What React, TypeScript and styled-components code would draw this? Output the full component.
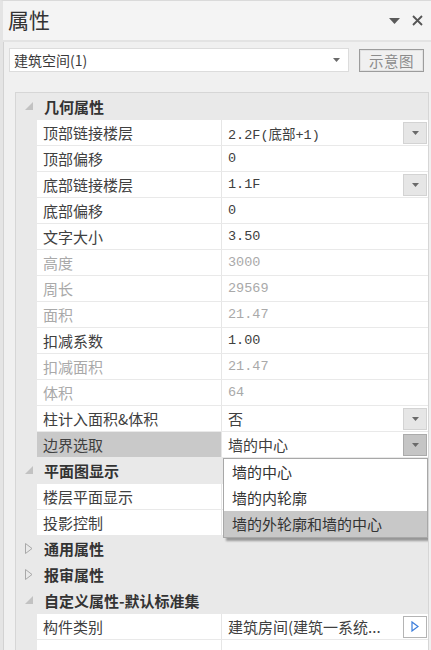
import styled, { createGlobalStyle } from 'styled-components';

const GlobalStyle = createGlobalStyle`
  html, body {
    margin: 0;
    padding: 0;
    background: #f0f0f0;
  }
  body {
    font-family: 'Noto Sans CJK SC', 'Noto Sans', sans-serif;
    color: #3a3a3a;
  }
`;

const Window = styled.div`
  width: 431px;
  height: 650px;
  box-sizing: border-box;
  border-top: 1px solid #dadada;
  border-left: 3px solid #e4e4e4;
  box-shadow: inset 1px 0 0 #d2d2d2;
  background: #f0f0f0;
  display: flex;
  flex-direction: column;
  overflow: hidden;
`;

const TitleBar = styled.div`
  height: 39px;
  flex-shrink: 0;
  display: flex;
  align-items: center;
  justify-content: space-between;
  padding: 0 8px 0 5px;
  background: #f4f4f4;
  border-bottom: 2px solid #e3e3e3;
`;

const Title = styled.div`
  font-size: 21px;
  color: #333;
  line-height: 1;
  margin-top: -3px;
`;

const TitleIcons = styled.div`
  display: flex;
  align-items: center;
  gap: 12px;
`;

const Toolbar = styled.div`
  display: flex;
  align-items: flex-start;
  gap: 10px;
  padding: 6px 0 0 6px;
  flex-shrink: 0;
`;

const Combo = styled.div`
  width: 340px;
  height: 24px;
  box-sizing: border-box;
  background: #fff;
  border: 1px solid #dcdcdc;
  display: flex;
  align-items: center;
  justify-content: space-between;
  padding: 0 8px 1px 4px;
  font-size: 14px;
`;

const SchemeButton = styled.div`
  width: 65px;
  height: 23px;
  margin-top: 1px;
  box-sizing: border-box;
  border: 1px solid #9c9c9c;
  box-shadow: inset 0 0 0 1px #e2e2e2;
  display: flex;
  align-items: center;
  justify-content: center;
  padding-bottom: 1px;
  font-size: 14.5px;
  color: #8c8c8c;
  letter-spacing: 0.5px;
`;

const Panel = styled.div`
  flex: 1;
  margin: 20px 2px 0 12px;
  padding-top: 1px;
  border: 1px solid #d6d6d6;
  border-bottom: none;
  background: #e9e9e9;
  overflow: hidden;
`;

const GroupHeader = styled.div`
  height: 26px;
  box-sizing: border-box;
  display: flex;
  align-items: center;
  padding: 0 0 2px 9px;
  gap: 11px;
  font-size: 15px;
  font-weight: 700;
  color: #333;
`;

const Row = styled.div`
  position: relative;
  height: 26px;
  margin-left: 21px;
  box-sizing: border-box;
  display: grid;
  grid-template-columns: 185px 1fr;
  border-bottom: 1px solid #e9e9e9;
`;

const Label = styled.div<{ $selected?: boolean; $disabled?: boolean }>`
  background: ${(p) => (p.$selected ? '#c9c9c9' : '#fff')};
  border-right: 1px solid #e6e6e6;
  display: flex;
  align-items: center;
  padding: 0 0 1px 6px;
  font-size: 15px;
  color: ${(p) => (p.$disabled ? '#a9a9a9' : '#404040')};
  white-space: nowrap;
`;

const Value = styled.div<{ $disabled?: boolean }>`
  background: #fff;
  display: flex;
  align-items: center;
  justify-content: space-between;
  padding-left: 6px;
  padding-right: 1px;
  font-family: 'Liberation Mono', 'Noto Sans CJK SC', monospace;
  font-size: 13.5px;
  color: ${(p) => (p.$disabled ? '#a9a9a9' : '#404040')};
  white-space: nowrap;
`;

const CjkValue = styled.span`
  font-family: 'Noto Sans CJK SC', sans-serif;
  font-size: 15px;
  margin-top: -1px;
`;

const DropButton = styled.div<{ $active?: boolean }>`
  width: 24px;
  height: 22px;
  box-sizing: border-box;
  background: ${(p) => (p.$active ? '#c5c5c5' : '#e6e6e6')};
  border: 1px solid ${(p) => (p.$active ? '#ababab' : '#d3d3d3')};
  display: flex;
  align-items: center;
  justify-content: center;
`;

const MoreButton = styled.div`
  width: 24px;
  height: 22px;
  box-sizing: border-box;
  background: #fff;
  border: 1px solid #b4b4b4;
  display: flex;
  align-items: center;
  justify-content: center;
`;

const Menu = styled.div`
  position: absolute;
  top: 26px;
  left: 186px;
  width: 205px;
  z-index: 2;
  box-sizing: border-box;
  background: #fff;
  border: 1px solid #a8a8a8;
  box-shadow: 3px 3px 2px rgba(0, 0, 0, 0.35);
`;

const MenuItem = styled.div<{ $hover?: boolean }>`
  height: 26px;
  box-sizing: border-box;
  display: flex;
  align-items: center;
  padding: 0 0 1px 8px;
  font-size: 15px;
  color: #333;
  background: ${(p) => (p.$hover ? '#c8c8c8' : '#fff')};
`;

const SmallArrow = () => (
  <svg width="7" height="4" viewBox="0 0 7 4">
    <polygon points="0,0 7,0 3.5,4" fill="#6a6a6a" />
  </svg>
);

const Expanded = () => (
  <svg width="8" height="8" viewBox="0 0 8 8">
    <polygon points="8,0 8,8 0,8" fill="#c2c2c2" />
  </svg>
);

const Collapsed = () => (
  <svg width="8" height="11" viewBox="0 0 8 11">
    <polygon points="0.5,0.5 7,5.5 0.5,10.5" fill="none" stroke="#a8a8a8" strokeWidth="1" />
  </svg>
);

type Prop = {
  label: string;
  value?: string;
  cjk?: boolean;
  disabled?: boolean;
  drop?: boolean;
};

const geometry: Prop[] = [
  { label: '顶部链接楼层', value: '2.2F(底部+1)', drop: true },
  { label: '顶部偏移', value: '0' },
  { label: '底部链接楼层', value: '1.1F', drop: true },
  { label: '底部偏移', value: '0' },
  { label: '文字大小', value: '3.50' },
  { label: '高度', value: '3000', disabled: true },
  { label: '周长', value: '29569', disabled: true },
  { label: '面积', value: '21.47', disabled: true },
  { label: '扣减系数', value: '1.00' },
  { label: '扣减面积', value: '21.47', disabled: true },
  { label: '体积', value: '64', disabled: true },
  { label: '柱计入面积&体积', value: '否', cjk: true, drop: true },
];

const PropRow = ({ p }: { p: Prop }) => (
  <Row>
    <Label $disabled={p.disabled}>{p.label}</Label>
    <Value $disabled={p.disabled}>
      {p.cjk ? <CjkValue>{p.value}</CjkValue> : <span>{p.value}</span>}
      {p.drop && (
        <DropButton>
          <SmallArrow />
        </DropButton>
      )}
    </Value>
  </Row>
);

export default function App() {
  return (
    <>
      <GlobalStyle />
      <Window>
        <TitleBar>
          <Title>属性</Title>
          <TitleIcons>
            <svg width="11" height="6" viewBox="0 0 11 6">
              <polygon points="0,0 11,0 5.5,6" fill="#5a5a5a" />
            </svg>
            <svg width="11" height="11" viewBox="0 0 11 11">
              <path d="M1 1 L10 10 M10 1 L1 10" stroke="#555" strokeWidth="1.8" />
            </svg>
          </TitleIcons>
        </TitleBar>

        <Toolbar>
          <Combo>
            <span>建筑空间(1)</span>
            <SmallArrow />
          </Combo>
          <SchemeButton>示意图</SchemeButton>
        </Toolbar>

        <Panel>
          <GroupHeader>
            <Expanded />
            几何属性
          </GroupHeader>
          {geometry.map((p) => (
            <PropRow key={p.label} p={p} />
          ))}
          <Row>
            <Label $selected>边界选取</Label>
            <Value>
              <CjkValue>墙的中心</CjkValue>
              <DropButton $active>
                <SmallArrow />
              </DropButton>
            </Value>
            <Menu>
              <MenuItem>墙的中心</MenuItem>
              <MenuItem>墙的内轮廓</MenuItem>
              <MenuItem $hover>墙的外轮廓和墙的中心</MenuItem>
            </Menu>
          </Row>

          <GroupHeader>
            <Expanded />
            平面图显示
          </GroupHeader>
          <PropRow p={{ label: '楼层平面显示', value: '' }} />
          <PropRow p={{ label: '投影控制', value: '' }} />

          <GroupHeader>
            <Collapsed />
            通用属性
          </GroupHeader>
          <GroupHeader>
            <Collapsed />
            报审属性
          </GroupHeader>
          <GroupHeader>
            <Expanded />
            自定义属性-默认标准集
          </GroupHeader>
          <Row>
            <Label>构件类别</Label>
            <Value>
              <CjkValue>建筑房间(建筑一系统...</CjkValue>
              <MoreButton>
                <svg width="8" height="11" viewBox="0 0 8 11">
                  <polygon points="1,1 7,5.5 1,10" fill="none" stroke="#3b7ddb" strokeWidth="1.2" />
                </svg>
              </MoreButton>
            </Value>
          </Row>
          <Row>
            <Label />
            <Value />
          </Row>
        </Panel>
      </Window>
    </>
  );
}
